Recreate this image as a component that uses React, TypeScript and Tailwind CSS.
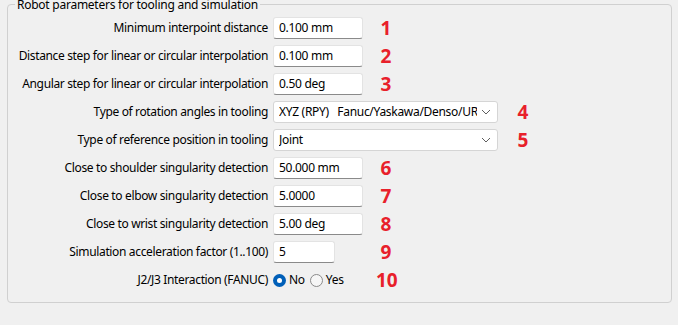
import React from 'react';

const font = { fontFamily: '"Noto Sans", "Open Sans", sans-serif' };

function Num({ n }: { n: number }) {
  return (
    <span className="w-[20px] text-center text-[19px] font-bold leading-none text-[#e8202a]" style={font}>
      {n}
    </span>
  );
}

function TextBox({ value, w = 'w-[90px]' }: { value: string; w?: string }) {
  return (
    <div className={`${w} flex h-[22px] items-center rounded-[3px] border border-[#e3e3e3] border-b-[#8a8a8a] bg-white pl-[5px] text-[12px] tracking-[-0.3px] text-black`}>
      {value}
    </div>
  );
}

function Combo({ value }: { value: string }) {
  return (
    <div className="flex h-[22px] w-[225px] items-center rounded-[3px] border border-[#d5d5d5] bg-white pl-[5px] pr-[6px] text-[12px] tracking-[-0.3px] text-black">
      <span className="flex-1 overflow-hidden whitespace-pre">{value}</span>
      <svg width="10" height="6" viewBox="0 0 10 6" className="ml-[4px] shrink-0">
        <path d="M1 1 L5 5 L9 1" fill="none" stroke="#5f5f5f" strokeWidth="1" />
      </svg>
    </div>
  );
}

function Row({ label, children, n, wide = false }: { label: string; children: React.ReactNode; n: number; wide?: boolean }) {
  return (
    <div className="flex h-[22px] items-center">
      <div className="w-[260px] whitespace-nowrap text-right text-[12px] tracking-[-0.35px] text-black">{label}</div>
      <div className="ml-[5px] flex items-center">
        <div className={wide ? 'w-[240px]' : 'w-[103px]'}>{children}</div>
        <Num n={n} />
      </div>
    </div>
  );
}

function Radio({ checked, label }: { checked?: boolean; label: string }) {
  return (
    <span className="flex items-center">
      {checked ? (
        <span className="flex h-[13px] w-[13px] items-center justify-center rounded-full bg-[#005fb8]">
          <span className="h-[5px] w-[5px] rounded-full bg-white" />
        </span>
      ) : (
        <span className="h-[13px] w-[13px] rounded-full border border-[#8a8a8a] bg-[#f6f6f6]" />
      )}
      <span className="ml-[3px] text-[12px] tracking-[-0.3px] text-black">{label}</span>
    </span>
  );
}

export default function App() {
  return (
    <div className="relative h-[325px] w-[678px] overflow-hidden bg-[#f0f0f0]" style={font}>
      <div className="relative ml-[7px] mt-[4px] h-[299px] w-[665px] rounded-[4px] border border-[#d0d0d0] pt-[12px]">
        <span className="absolute left-[7px] top-[-8px] whitespace-nowrap bg-[#f0f0f0] px-[2px] text-[12px] leading-[16px] tracking-[-0.25px] text-black">
          Robot parameters for tooling and simulation
        </span>
        <div className="flex flex-col gap-[6px]">
          <Row label="Minimum interpoint distance" n={1}><TextBox value="0.100 mm" /></Row>
          <Row label="Distance step for linear or circular interpolation" n={2}><TextBox value="0.100 mm" /></Row>
          <Row label="Angular step for linear or circular interpolation" n={3}><TextBox value="0.50 deg" /></Row>
          <Row label="Type of rotation angles in tooling" n={4} wide><Combo value="XYZ (RPY)   Fanuc/Yaskawa/Denso/UR/ABB" /></Row>
          <Row label="Type of reference position in tooling" n={5} wide><Combo value="Joint" /></Row>
          <Row label="Close to shoulder singularity detection" n={6}><TextBox value="50.000 mm" /></Row>
          <Row label="Close to elbow singularity detection" n={7}><TextBox value="5.0000" /></Row>
          <Row label="Close to wrist singularity detection" n={8}><TextBox value="5.00 deg" /></Row>
          <Row label="Simulation acceleration factor (1..100)" n={9}><TextBox value="5" w="w-[62px]" /></Row>
          <Row label="J2/J3 Interaction (FANUC)" n={10}>
            <div className="flex items-center gap-[5px]">
              <Radio checked label="No" />
              <Radio label="Yes" />
            </div>
          </Row>
        </div>
      </div>
    </div>
  );
}
